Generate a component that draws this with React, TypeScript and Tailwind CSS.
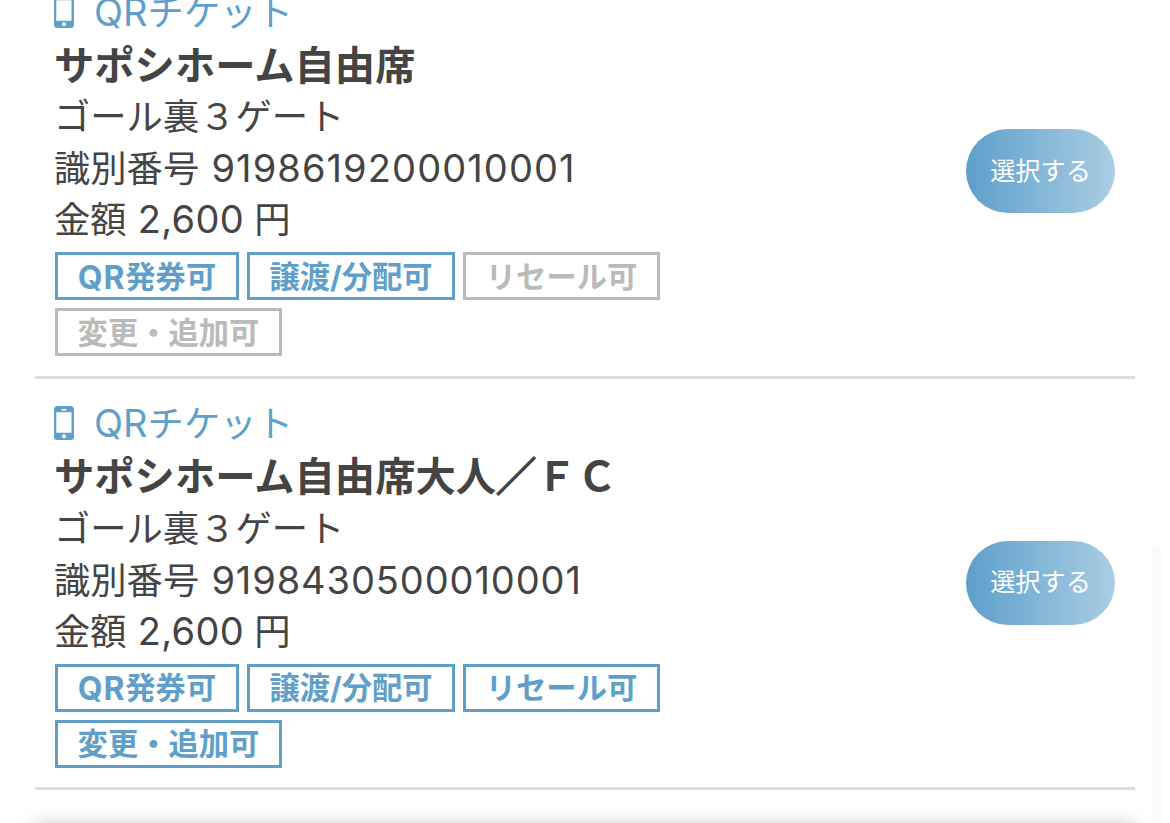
type Tag = { prefix?: string; label: string; width: string; enabled: boolean };

type Ticket = {
  name: string;
  slash?: boolean;
  suffix?: string;
  gate: string;
  code: string;
  codeSpacing: string;
  price: string;
  tags: Tag[];
};

const makeTags = (resale: boolean, change: boolean): Tag[] => [
  { prefix: "QR", label: "発券可", width: "w-[184px]", enabled: true },
  { label: "譲渡/分配可", width: "w-[208px]", enabled: true },
  { label: "リセール可", width: "w-[197px]", enabled: resale },
  { label: "変更・追加可", width: "w-[227px]", enabled: change },
];

const tickets: Ticket[] = [
  {
    name: "サポシホーム自由席",
    gate: "ゴール裏３ゲート",
    code: "9198619200010001",
    codeSpacing: "tracking-[1.100px]",
    price: "2,600",
    tags: makeTags(false, false),
  },
  {
    name: "サポシホーム自由席大人",
    slash: true,
    suffix: "ＦＣ",
    gate: "ゴール裏３ゲート",
    code: "9198430500010001",
    codeSpacing: "tracking-[0.900px]",
    price: "2,600",
    tags: makeTags(true, true),
  },
];

const PhoneIcon = () => (
  <svg viewBox="0 0 20 34" className="-mt-1.5 w-5 h-[34px] shrink-0" fill="none">
    <path
      fill="currentColor"
      fillRule="evenodd"
      d="M3.500 0h13A3.500 3.500 0 0 1 20 3.500v27a3.500 3.500 0 0 1-3.500 3.500h-13A3.500 3.500 0 0 1 0 30.500v-27A3.500 3.500 0 0 1 3.500 0zM2.300 6.200v20.500h15.200V6.200zM7.500 3.100v1.300h5V3.100zM10 28.200a2 2 0 1 0 0 4a2 2 0 0 0 0-4z"
    />
  </svg>
);

const TicketRow = ({ ticket }: { ticket: Ticket }) => (
  <li className="flex h-[411.400px] items-center justify-between border-b-3 border-[#dcdcdc] px-5">
    <div className="w-[640px] whitespace-nowrap pt-[2.400px] text-[36.300px] leading-[51.400px] text-[#444]">
      {/* Ticket type */}
      <p className="-ml-px flex h-[51px] items-center text-[#5f9fca]">
        <PhoneIcon />
        <span className="-mt-[3px] ml-5">
          <span className="text-[38px]">QR</span>
          <span className="tracking-[0.100px]">チケット</span>
        </span>
      </p>
      <h2 className="-ml-px h-[52.400px] text-[40.300px] font-bold">
        {ticket.name}
        {ticket.slash && <span className="[-webkit-text-stroke:1.500px_#444]">／</span>}
        {ticket.suffix}
      </h2>
      <p className="-ml-px h-[51px]">{ticket.gate}</p>
      <p className="-ml-px h-[51px]">
        識別番号 <span className={`ml-0.5 text-[38px] ${ticket.codeSpacing}`}>{ticket.code}</span>
      </p>
      <p className="-ml-px h-[51px]">
        金額 <span className="ml-px text-[38px] tracking-[0.300px]">{ticket.price}</span> 円
      </p>

      {/* Tags */}
      <ul className="mt-[7px] flex flex-wrap gap-2">
        {ticket.tags.map((tag) => (
          <li
            key={tag.label}
            className={`flex h-12 items-center justify-center border-3 pt-0.5 text-[30.300px] font-bold ${tag.width} ${
              tag.enabled ? "border-[#5f9fca] text-[#5f9fca]" : "border-[#bababa] text-[#bababa]"
            }`}
          >
            {tag.prefix && <span className="text-[32px] tracking-[0.800px]">{tag.prefix}</span>}
            {tag.label}
          </li>
        ))}
      </ul>
    </div>

    <button
      type="button"
      className="h-[84px] w-[149px] shrink-0 rounded-full bg-linear-to-r from-[#5c9fcb] to-[#aacde3] text-[25.200px] text-white"
    >
      選択する
    </button>
  </li>
);

const App = () => {
  return (
    <div className="relative h-[823px] w-[1170px] overflow-hidden bg-white font-[Inter,'Noto_Sans_CJK_JP',sans-serif]">
      <ul className="-mt-[32.750px] px-[35px]">
        {tickets.map((ticket) => (
          <TicketRow key={ticket.code} ticket={ticket} />
        ))}
      </ul>

      {/* Shadow of the next panel */}
      <div className="absolute top-[827px] left-[35px] h-10 w-[1100px] shadow-[0_0_20px_rgba(0,0,0,0.3)]" />

      {/* Scrollbar track */}
      <div className="absolute top-[545px] right-[9px] h-[300px] w-[9px] rounded-full bg-[#fafafa]" />
    </div>
  );
};

export default App;
